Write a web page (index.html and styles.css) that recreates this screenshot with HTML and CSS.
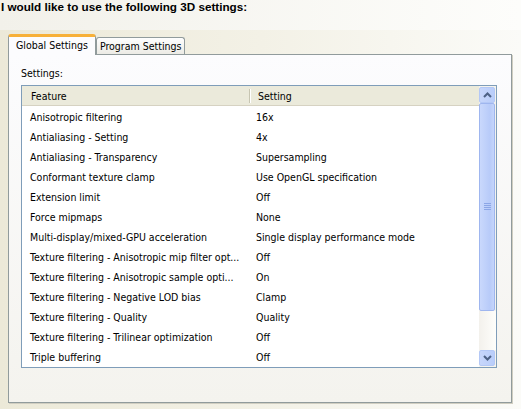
FILE: index.html
```html
<!DOCTYPE html>
<html lang="en">
<head>
    <meta charset="UTF-8">
    <title>3D Settings</title>
    <link rel="stylesheet" href="styles.css">
</head>
<body>
    <div class="title">I would like to use the following 3D settings:</div>
    <div class="tabs">
        <div class="tab active">Global Settings</div>
        <div class="tab">Program Settings</div>
    </div>
    <div class="panel">
        <div class="label">Settings:</div>
        <div class="list">
            <div class="list-body">
                <div class="row head">
                    <div class="cell">Feature</div>
                    <div class="cell">Setting</div>
                </div>
                <div class="row"><div class="cell">Anisotropic filtering</div><div class="cell">16x</div></div>
                <div class="row"><div class="cell">Antialiasing - Setting</div><div class="cell">4x</div></div>
                <div class="row"><div class="cell">Antialiasing - Transparency</div><div class="cell">Supersampling</div></div>
                <div class="row"><div class="cell">Conformant texture clamp</div><div class="cell">Use OpenGL specification</div></div>
                <div class="row"><div class="cell">Extension limit</div><div class="cell">Off</div></div>
                <div class="row"><div class="cell">Force mipmaps</div><div class="cell">None</div></div>
                <div class="row"><div class="cell">Multi-display/mixed-GPU acceleration</div><div class="cell">Single display performance mode</div></div>
                <div class="row"><div class="cell">Texture filtering - Anisotropic mip filter opt...</div><div class="cell">Off</div></div>
                <div class="row"><div class="cell">Texture filtering - Anisotropic sample opti...</div><div class="cell">On</div></div>
                <div class="row"><div class="cell">Texture filtering - Negative LOD bias</div><div class="cell">Clamp</div></div>
                <div class="row"><div class="cell">Texture filtering - Quality</div><div class="cell">Quality</div></div>
                <div class="row"><div class="cell">Texture filtering - Trilinear optimization</div><div class="cell">Off</div></div>
                <div class="row"><div class="cell">Triple buffering</div><div class="cell">Off</div></div>
            </div>
            <div class="scrollbar">
                <div class="sb-btn">
                    <svg width="9" height="6" viewBox="0 0 9 6"><path d="M1 5 L4.5 1.5 L8 5" fill="none" stroke="#4d6185" stroke-width="2"/></svg>
                </div>
                <div class="sb-thumb">
                    <svg width="7" height="8" viewBox="0 0 7 8"><path d="M0 0.5h7M0 2.5h7M0 4.5h7M0 6.5h7" stroke="#8ca6e6" stroke-width="1"/></svg>
                </div>
                <div class="sb-track"></div>
                <div class="sb-btn">
                    <svg width="9" height="6" viewBox="0 0 9 6"><path d="M1 1 L4.5 4.5 L8 1" fill="none" stroke="#4d6185" stroke-width="2"/></svg>
                </div>
            </div>
        </div>
    </div>
</body>
</html>
```

FILE: styles.css
```css
body {
    margin: 0;
    width: 521px;
    height: 409px;
    overflow: hidden;
    font-family: Tahoma, "DejaVu Sans Condensed", "Liberation Sans", sans-serif;
    font-size: 10.5px;
    color: #000;
    background: linear-gradient(to right, #ece9d8 0%, #f3f1e6 50%, #fbfbf8 100%);
}
.title {
    height: 30px;
    padding-left: 1px;
    font-family: "Liberation Sans", Arial, sans-serif;
    font-weight: bold;
    font-size: 11.7px;
    line-height: 13px;
    background: linear-gradient(to right, #f2f1ea, #fdfdfb);
}
.tabs {
    display: flex;
    align-items: flex-end;
    margin: 4px 0 0 8px;
    height: 20px;
}
.tab {
    height: 17px;
    line-height: 17px;
    padding: 0 3px 0 3px;
    border: 1px solid #919b9c;
    border-bottom: none;
    border-radius: 3px 3px 0 0;
    background: linear-gradient(to bottom, #fefefe, #ecebe5);
    box-sizing: border-box;
}
.tab.active {
    height: 21px;
    margin-bottom: -1px;
    padding: 0 7px 0 7px;
    border-top: 3px solid #f7b038;
    background: #fcfcfe;
    position: relative;
    z-index: 1;
    line-height: 16px;
}
.panel {
    margin-left: 8px;
    width: 504px;
    height: 349px;
    box-sizing: border-box;
    border: 1px solid #919b9c;
    box-shadow: 1px 1px 0 #d0cec1;
    background: linear-gradient(to bottom, #fcfcfe, #f4f3ee);
    padding: 11px 0 0 12px;
}
.label {
    height: 19px;
    line-height: 14px;
}
.list {
    display: flex;
    width: 476px;
    height: 283px;
    box-sizing: border-box;
    border: 1px solid #7f9db9;
    background: #fff;
}
.list-body {
    flex: 1;
}
.row {
    display: grid;
    grid-template-columns: 228px 1fr;
    height: 20px;
    line-height: 20px;
    white-space: nowrap;
}
.row .cell {
    padding-top: 1px;
}
.row .cell:first-child {
    padding-left: 8px;
    overflow: hidden;
}
.row .cell:last-child {
    padding-left: 6px;
}
.row.head {
    background: #ebeadb;
    border-bottom: 1px solid #d6d2c2;
    height: 19px;
    line-height: 19px;
}
.row.head .cell:first-child {
    padding-left: 9px;
    border-right: 1px solid #c7c5b2;
    box-shadow: 1px 0 0 #fff;
    margin: 3px 0;
    padding-top: 1px;
    line-height: 12px;
}
.row.head .cell:last-child {
    padding-left: 8px;
}
.scrollbar {
    width: 17px;
    display: flex;
    flex-direction: column;
    background: #f4f3ee;
    padding: 1px 0;
    box-sizing: border-box;
}
.sb-btn {
    height: 16px;
    width: 16px;
    box-sizing: border-box;
    border: 1px solid #b4c8f6;
    border-radius: 2px;
    background: linear-gradient(to right, #c7d6fb, #b9cdfa);
    display: flex;
    align-items: center;
    justify-content: center;
}
.sb-thumb {
    height: 208px;
    width: 16px;
    box-sizing: border-box;
    border: 1px solid #9fb6ef;
    border-radius: 2px;
    background: linear-gradient(to right, #c9d8fc, #b8cbf9 70%, #c5d5fb);
    display: flex;
    align-items: center;
    justify-content: center;
}
.sb-track {
    flex: 1;
    background: linear-gradient(to right, #f3f1ec, #fefefb);
}
```
